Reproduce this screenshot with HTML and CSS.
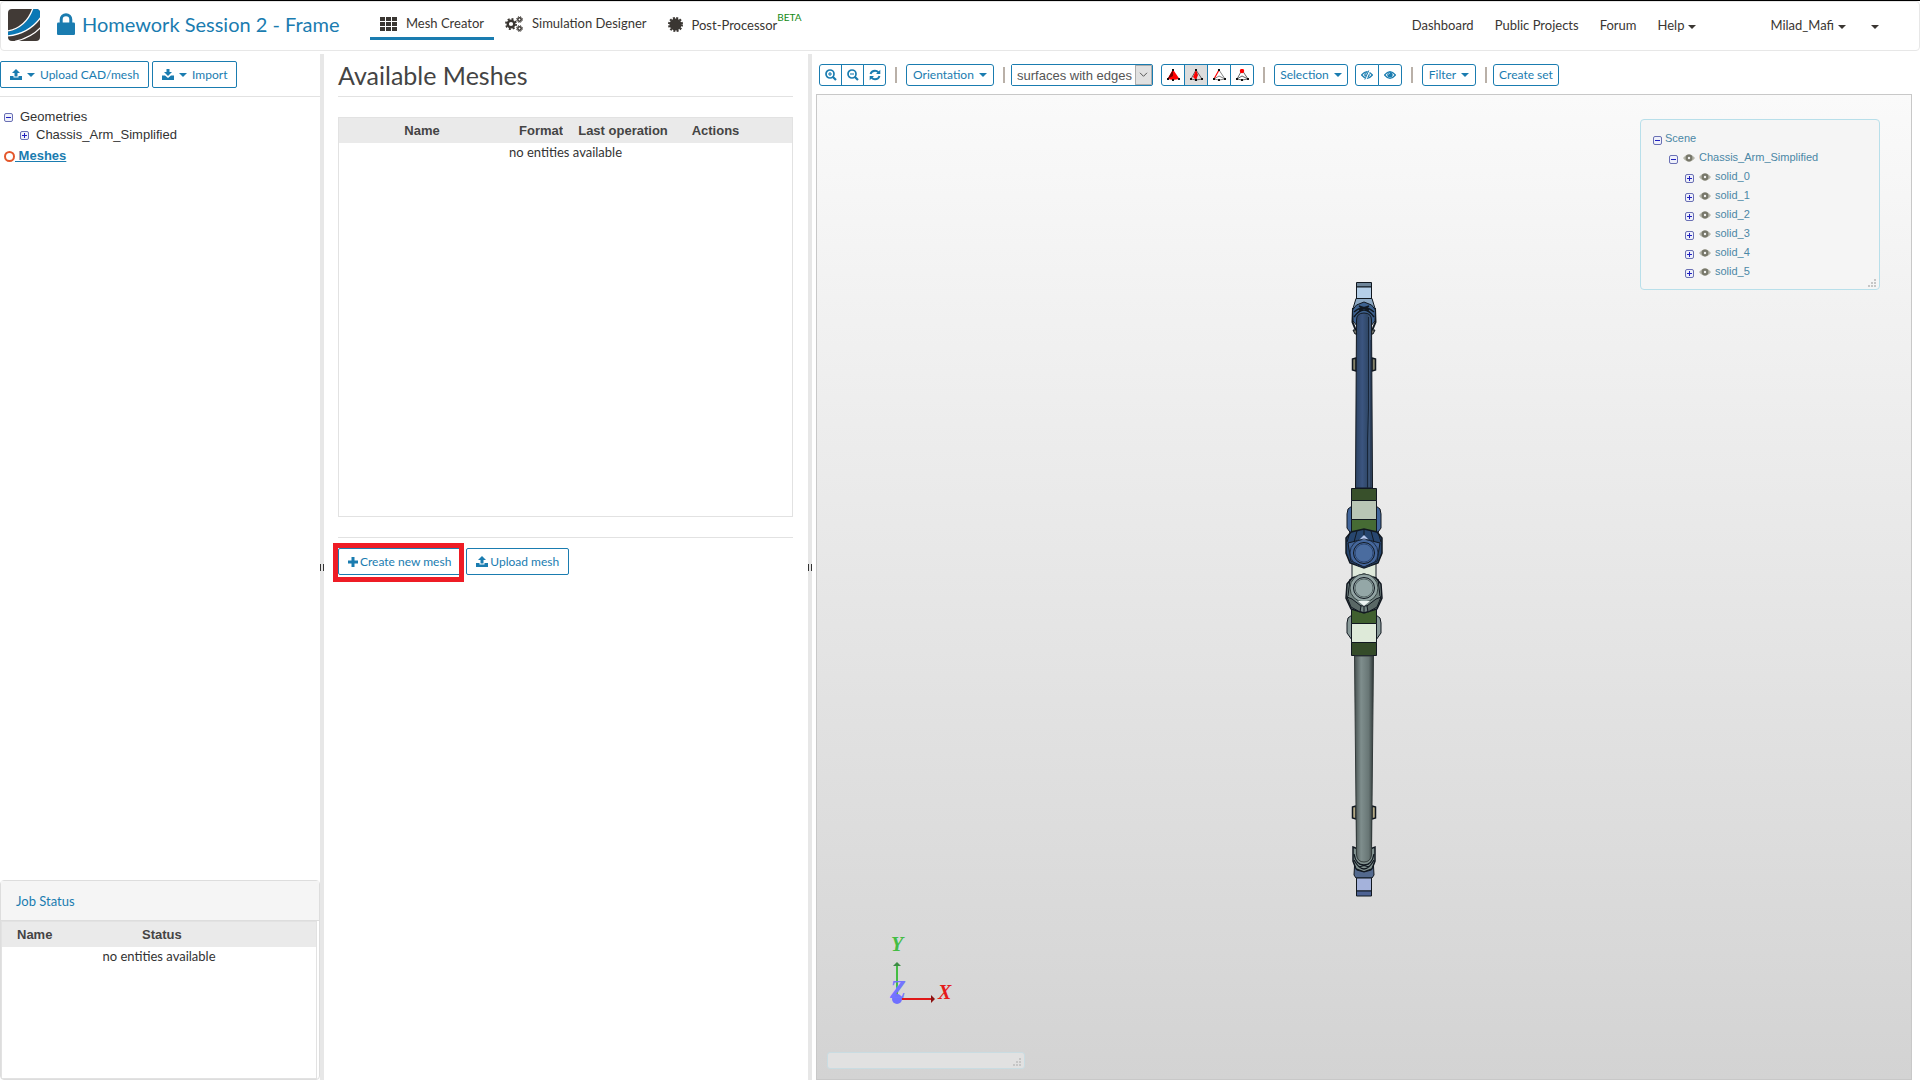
FILE: index.html
```html
<!DOCTYPE html>
<html lang="en">
<head>
<meta charset="utf-8">
<title>Homework Session 2 - Frame</title>
<meta name="viewport" content="width=device-width, initial-scale=1">
<link rel="stylesheet" href="styles.css">
</head>
<body>
<svg class="defs" width="0" height="0" aria-hidden="true">
  <symbol id="minus" viewBox="0 0 9 9"><rect x=".5" y=".5" width="8" height="8" rx="1.5" fill="#eef0fa" stroke="#6a70b4"/><path d="M2 4.5h5" stroke="#2020c0"/></symbol>
  <symbol id="plus" viewBox="0 0 9 9"><rect x=".5" y=".5" width="8" height="8" rx="1.5" fill="#eef0fa" stroke="#6a70b4"/><path d="M2 4.5h5M4.5 2v5" stroke="#2020c0"/></symbol>
  <symbol id="eye" viewBox="0 0 12 8"><path d="M0 4Q6-3.600 12 4 6 11.600 0 4z" fill="#b5b5a9"/><circle cx="6" cy="4" r="3.400" fill="#77776a"/><circle cx="6" cy="4" r="1.200" fill="#f4f4f4"/></symbol>
  <symbol id="upload" viewBox="0 0 12 11"><path d="M6 0l4 4H7.500v3.500h-3V4H2zM0 7h3.500v1.500h5V7H12v4H0z" fill="currentColor"/></symbol>
  <symbol id="download" viewBox="0 0 12 11"><path d="M4.500 0h3v3H10L6 7 2 3h2.500zM0 6.500h3L6 9l3-2.500h3V11H0z" fill="currentColor"/></symbol>
  <symbol id="view" viewBox="0 0 12 8"><path d="M.6 4Q6-2.600 11.400 4 6 10.600.6 4z" fill="none" stroke="currentColor" stroke-width="1.200"/><circle cx="6" cy="3.700" r="2.700" fill="currentColor"/><path d="M4.500 3.500Q4.600 2.300 5.800 2.200" fill="none" stroke="#fff" stroke-width=".7"/></symbol>
  <symbol id="grip" viewBox="0 0 8 8"><path d="M6 0h2v2H6zM3 3h2v2H3zM6 3h2v2H6zM0 6h2v2H0zM3 6h2v2H3zM6 6h2v2H6z" fill="#c6c6c6"/></symbol>
</svg>

<header class="topbar">
  <a class="brand" href="#" aria-label="Home"><svg width="32" height="32" viewBox="0 0 32 32"><defs><clipPath id="lg"><rect width="32" height="32" rx="4"/></clipPath></defs><g clip-path="url(#lg)"><path fill="#413a36" d="M0 0h32v32H0z"/><path d="M25-2Q19 20-2 23v4Q22 26 34 5V-2z" fill="#0a78b5"/><path d="M25-1Q18 19-1 22M33 8Q21 25-1 27M33 18Q24 28 7 32.500" fill="none" stroke="#fff" stroke-width="1.300"/></g></svg></a>
  <svg class="lock" width="18" height="22" viewBox="0 0 18 22"><path d="M4.200 11V6.500a4.800 4.800 0 0 1 9.600 0V11" fill="none" stroke="#1a7cb0" stroke-width="3"/><rect y="9.500" width="18" height="12.500" rx="1.200" fill="#1a7cb0"/></svg>
  <h1 class="title">Homework Session 2 - Frame</h1>
  <nav class="tabs">
    <a class="tab active" href="#"><svg width="17" height="14" viewBox="0 0 17 14"><path d="M0 0h5v4H0zM6 0h5v4H6zM12 0h5v4h-5zM0 5h5v4H0zM6 5h5v4H6zM12 5h5v4h-5zM0 10h5v4H0zM6 10h5v4H6zM12 10h5v4h-5z" fill="#3a3632"/></svg>Mesh Creator</a>
    <a class="tab" href="#"><svg width="18" height="16" viewBox="0 0 18 16"><g fill="none" stroke="#3a3632"><circle cx="6" cy="8" r="3.300" stroke-width="2.400"/><circle cx="6" cy="8" r="5.100" stroke-width="1.700" stroke-dasharray="2 2"/><circle cx="14.500" cy="3.500" r="1.700" stroke-width="1.500"/><circle cx="14.500" cy="3.500" r="2.900" stroke-width="1" stroke-dasharray="1.300 1"/><circle cx="14.500" cy="12.500" r="1.700" stroke-width="1.500"/><circle cx="14.500" cy="12.500" r="2.900" stroke-width="1" stroke-dasharray="1.300 1"/></g></svg>Simulation Designer</a>
    <a class="tab" href="#"><svg width="15" height="15" viewBox="0 0 15 15"><circle cx="7.500" cy="7.500" r="6" fill="#3a3632"/><circle cx="7.500" cy="7.500" r="6.500" fill="none" stroke="#3a3632" stroke-width="2" stroke-dasharray="2 1.400"/></svg><span>Post-Processor<sup class="beta">BETA</sup></span></a>
  </nav>
  <nav class="menu">
    <a href="#">Dashboard</a>
    <a href="#">Public Projects</a>
    <a href="#">Forum</a>
    <a href="#">Help<i class="caret"></i></a>
    <a class="user" href="#">Milad_Mafi<i class="caret"></i></a>
    <a class="more" href="#" aria-label="More"><i class="caret"></i></a>
  </nav>
</header>

<main class="workspace">
  <aside class="sidebar">
    <div class="side-actions">
      <button class="btn" type="button"><svg width="12" height="11"><use href="#upload"/></svg><i class="caret"></i>Upload CAD/mesh</button>
      <button class="btn" type="button"><svg width="12" height="11"><use href="#download"/></svg><i class="caret"></i>Import</button>
    </div>
    <ul class="tree">
      <li><svg width="9" height="9"><use href="#minus"/></svg>Geometries</li>
      <li class="child"><svg width="9" height="9"><use href="#plus"/></svg>Chassis_Arm_Simplified</li>
      <li class="selected"><svg width="11" height="11" viewBox="0 0 11 11"><circle cx="5.500" cy="5.500" r="4.500" fill="none" stroke="#e4572b" stroke-width="2"/></svg><a href="#">&nbsp;Meshes</a></li>
    </ul>
    <section class="jobs">
      <h2>Job Status</h2>
      <div class="job-list">
        <table class="grid">
          <colgroup><col class="j-name"><col></colgroup>
          <thead><tr><th>Name</th><th>Status</th></tr></thead>
          <tbody><tr><td colspan="2">no entities available</td></tr></tbody>
        </table>
      </div>
    </section>
  </aside>
  <div class="splitter"></div>
  <section class="meshes">
    <h2>Available Meshes</h2>
    <div class="mesh-list">
      <table class="grid">
        <colgroup><col class="m-name"><col class="m-format"><col class="m-last"><col></colgroup>
        <thead><tr><th>Name</th><th class="format">Format</th><th>Last operation</th><th class="actions">Actions</th></tr></thead>
        <tbody><tr><td colspan="4">no entities available</td></tr></tbody>
      </table>
    </div>
    <div class="mesh-actions">
      <button class="btn create" type="button"><svg width="10" height="10" viewBox="0 0 10 10"><path d="M3.500 0h3v3.500H10v3H6.500V10h-3V6.500H0v-3h3.500z" fill="currentColor"/></svg>Create new mesh</button>
      <button class="btn upload" type="button"><svg width="12" height="11"><use href="#upload"/></svg>Upload mesh</button>
    </div>
  </section>
  <div class="splitter"></div>
  <section class="viewer">
    <div class="toolbar">
      <div class="group">
        <button type="button" aria-label="Zoom in"><svg width="12" height="12" viewBox="0 0 12 12"><g fill="none" stroke="currentColor"><circle cx="5" cy="5" r="4" stroke-width="1.700"/><path d="M8 8l3 3" stroke-width="2.200"/><path d="M3 5h4M5 3v4" stroke-width="1.100"/></g></svg></button>
        <button type="button" aria-label="Zoom out"><svg width="12" height="12" viewBox="0 0 12 12"><g fill="none" stroke="currentColor"><circle cx="5" cy="5" r="4" stroke-width="1.700"/><path d="M8 8l3 3" stroke-width="2.200"/><path d="M3 5h4" stroke-width="1.100"/></g></svg></button>
        <button type="button" aria-label="Reset view"><svg width="12" height="12" viewBox="0 0 12 12"><g fill="none" stroke="currentColor" stroke-width="1.900"><path d="M1.500 5Q2.500 1.700 6 1.700q2 0 3.500 1.700M10.500 7Q9.500 10.300 6 10.300q-2 0-3.500-1.700"/></g><path d="M11.300.7v4.300H7zM.7 11.300V7H5z" fill="currentColor"/></svg></button>
      </div>
      <span class="sep"></span>
      <button class="tool orientation" type="button">Orientation<i class="caret"></i></button>
      <span class="sep tight"></span>
      <span class="picker"><select aria-label="Render mode"><option>surfaces with edges</option></select><svg width="17" height="20" viewBox="0 0 17 20"><path d="M4.500 7.500l4 4 4-4" fill="none" stroke="#444"/></svg></span>
      <div class="group pick">
        <button type="button" aria-label="Pick volumes"><svg width="13" height="12" viewBox="0 0 13 12"><path d="M6 .5l6.500 9.500L6 11 .5 10z" fill="#f00"/><path d="M6 .5L.5 10 6 7z" fill="#700"/><path d="M5 0h2v2H5zM0 9h2v2H0zM11 9h2v2h-2zM5 10h2v2H5z" fill="#111"/></svg></button>
        <button class="on" type="button" aria-label="Pick faces"><svg width="13" height="12" viewBox="0 0 13 12"><path d="M6 1L1 10l5 1zl6 9-6 1" fill="#ddd" stroke="#444" stroke-width=".8"/><path d="M6 1L3 8l3 3z" fill="#f00"/><path d="M6 1l2 5-2 5z" fill="#e00"/><path d="M5 0h2v2H5zM0 9h2v2H0zM11 9h2v2h-2zM5 10h2v2H5z" fill="#111"/></svg></button>
        <button type="button" aria-label="Pick edges"><svg width="13" height="12" viewBox="0 0 13 12"><path d="M6 1l6 9-6 1-5-1 5-3 6 3" fill="#fff" stroke="#777" stroke-width=".9"/><path d="M6 1L1 10" stroke="#f00" stroke-width="1.200"/><path d="M5 0h2v2H5zM0 9h2v2H0zM11 9h2v2h-2zM5 10h2v2H5z" fill="#111"/></svg></button>
        <button type="button" aria-label="Pick vertices"><svg width="13" height="12" viewBox="0 0 13 12"><path d="M6 1l6 9-6 1-5-1 5-3 6 3M6 1L1 10" fill="none" stroke="#555" stroke-width=".9"/><circle cx="6" cy="2" r="2.200" fill="#f00"/><path d="M0 9h2v2H0zM11 9h2v2h-2zM5 10h2v2H5z" fill="#111"/></svg></button>
      </div>
      <span class="sep"></span>
      <button class="tool selection" type="button">Selection<i class="caret"></i></button>
      <div class="group eyes">
        <button type="button" aria-label="Hide selection"><svg width="12" height="10" viewBox="0 -1 12 10"><use href="#view" width="12" height="8"/><path d="M4.300 8.500L8.300-.5" stroke="#fff" stroke-width="2"/><path d="M3.800 8.500L7.800-.5" stroke="currentColor"/></svg></button>
        <button type="button" aria-label="Show all"><svg width="12" height="8"><use href="#view"/></svg></button>
      </div>
      <span class="sep"></span>
      <button class="tool filter" type="button">Filter<i class="caret"></i></button>
      <span class="sep tight"></span>
      <button class="tool set" type="button">Create set</button>
    </div>
    <div class="canvas">
      <svg class="model" width="48" height="620" viewBox="0 0 48 620" role="img" aria-label="Chassis arm">
        <defs>
          <linearGradient id="blueRod"><stop offset="0" stop-color="#2c4363"/><stop offset=".4" stop-color="#3b5580"/><stop offset=".7" stop-color="#304868"/><stop offset="1" stop-color="#4d6485"/></linearGradient>
          <linearGradient id="greyRod"><stop offset="0" stop-color="#46504f"/><stop offset=".35" stop-color="#7f8e8d"/><stop offset=".75" stop-color="#687675"/><stop offset="1" stop-color="#303838"/></linearGradient>
        </defs>
        <g stroke="#111820" stroke-width="1">
          <path d="M16.500 2.500h15V7h-15z" fill="#6f8599"/><path d="M16.500 7h15v12h-15z" fill="#b5cfe8"/>
          <path d="M16 18.500h16l3 10H13z" fill="#8da9c4"/>
          <path d="M13 28l-.5 14 4 10M35 28l.5 14-4 10" fill="none" stroke-width="2"/>
          <path d="M12.500 30l4-5 7.500-3 7.500 3 4 5-.5 11-5 6H18l-5-6z" fill="#3e628f"/>
          <path d="M14 32q10-9 20 0M14 37q10-14 20 0M19 26l10 4M29 26l-10 4" fill="none" stroke-width="1.500"/>
          <path d="M13 50h4v4h-2zM31 50h4l-2 4h-2z" fill="#77776a"/>
          <path d="M12.500 79l3.500-1v13l-3.500-1zM35.500 79l-3.500-1v13l3.500-1z" fill="#85836b" stroke-width="1.500"/>
          <path d="M16.500 40q0-7 7.500-7t7.500 7l1 168H15.500z" fill="url(#blueRod)"/>
          <path d="M28.500 37v92l-1 30v49M31 60v148" fill="none" stroke="#172538"/>
          <path d="M8 229l4-3v29l-5-7v-14zM40 229l-4-3v29l5-7v-14z" fill="#42669b"/>
          <path d="M11.500 208.500h25v12h-25z" fill="#38502b"/><path d="M11.500 220.500h25v19h-25z" fill="#b9c6b5"/><path d="M11.500 239.500h25v15h-25z" fill="#466b34"/>
          <path d="M12 280h24v20H12z" fill="#dfeadb"/>
          <path d="M6 258l5-6 13-3 13 3 5 6v15l-4 10-14 5-14-5-4-10z" fill="#27466f" stroke-width="1.500"/>
          <path d="M24 250v11M10 252l-3 10M38 252l3 10M17 251l-3 11M31 251l3 11" fill="none"/>
          <path d="M8 263l16-4 16 4-3 18-13 6-13-6z" fill="#44669b"/><path d="M24 255l5 5H19z" fill="#b6c7ed" stroke="none"/>
          <circle cx="24" cy="273" r="14" fill="none" stroke="#1e304b"/><circle cx="24" cy="273" r="10.500" fill="#4a6c9f"/><circle cx="24" cy="273" r="9" fill="none" stroke="#2c4774"/>
          <path d="M8 338l4-3v25l-5-7v-10zM40 338l-4-3v25l5-7v-10z" fill="#899a99"/>
          <path d="M11.500 328h25v16h-25z" fill="#40602f"/><path d="M11.500 343.500h25v19h-25z" fill="#deead9"/><path d="M11.500 362.500h25v13h-25z" fill="#344b29"/>
          <path d="M7 304l5-6 12-4 12 4 5 6 1 14-5 11-13 4-13-4-5-11z" fill="#728381" stroke-width="1.500"/>
          <path d="M7 316l4 9 13 1 13-1 4-9M24 326v7M10 299l-2 17M38 299l2 17" fill="none"/>
          <path d="M7 317l5 2 9 7-1 6-9-5zM41 317l-5 2-9 7 1 6 9-5z" fill="#5a6866"/>
          <circle cx="24" cy="308" r="14" fill="#93a5a4" stroke="#364342"/><circle cx="24" cy="308" r="10.500" fill="#94a7a7"/><circle cx="24" cy="308" r="9" fill="none" stroke="#586867"/>
          <path d="M18 321h12l-6 5z" fill="#edf4f3" stroke="none"/>
          <path d="M12.500 527l3.500-1v13l-3.500-1zM35.500 527l-3.500-1v13l3.500-1z" fill="#b5aa86" stroke-width="1.500"/>
          <path d="M17 526v50M31 526v50" stroke-width="2"/>
          <path d="M13 567l5 2h12l5-2v14l-3 8-8 3-8-3-3-8z" fill="#81918f" stroke-width="1.500"/>
          <path d="M14.500 586l2 4 7.500 2 7.500-2 2-4 .5 9-2 3h-16l-2-3z" fill="#53698e"/>
          <path d="M14.500 376h19L31.500 575q-1 7-7.500 7t-7.500-7z" fill="url(#greyRod)" stroke="#333b3b"/>
          <path d="M14 574q2 11 10 11t10-11M14 580q5 9 10 9t10-9M19 587l10-3M29 587l-10-3" fill="none" stroke-width="1.300"/>
          <path d="M16.500 598h15v13h-15z" fill="#a4b2db"/><path d="M16.500 611h15v5h-15z" fill="#4d6293"/>
        </g>
      </svg>
      <div class="scene">
        <ul>
          <li><svg width="9" height="9"><use href="#minus"/></svg>Scene</li>
          <li class="l2"><svg width="9" height="9"><use href="#minus"/></svg><svg class="eye" width="12" height="8"><use href="#eye"/></svg>Chassis_Arm_Simplified</li>
          <li class="l3"><svg width="9" height="9"><use href="#plus"/></svg><svg class="eye" width="12" height="8"><use href="#eye"/></svg>solid_0</li>
          <li class="l3"><svg width="9" height="9"><use href="#plus"/></svg><svg class="eye" width="12" height="8"><use href="#eye"/></svg>solid_1</li>
          <li class="l3"><svg width="9" height="9"><use href="#plus"/></svg><svg class="eye" width="12" height="8"><use href="#eye"/></svg>solid_2</li>
          <li class="l3"><svg width="9" height="9"><use href="#plus"/></svg><svg class="eye" width="12" height="8"><use href="#eye"/></svg>solid_3</li>
          <li class="l3"><svg width="9" height="9"><use href="#plus"/></svg><svg class="eye" width="12" height="8"><use href="#eye"/></svg>solid_4</li>
          <li class="l3"><svg width="9" height="9"><use href="#plus"/></svg><svg class="eye" width="12" height="8"><use href="#eye"/></svg>solid_5</li>
        </ul>
        <svg class="grip" width="8" height="8"><use href="#grip"/></svg>
      </div>
      <svg class="axes" width="80" height="82" viewBox="0 -10 80 82">
        <path d="M12 60V28" stroke="#43bd43" stroke-width="2"/><path d="M8 29l4-4 4 4z" fill="#3d8b45"/>
        <path d="M12 62h36" stroke="#e01818" stroke-width="2"/><path d="M46 58l4 4-4 4z" fill="#8c1212"/>
        <circle cx="12" cy="62" r="5" fill="#7070ff"/>
        <text x="6" y="14" fill="#43bd43">Y</text><text class="near" x="5" y="61" fill="#7474ff">Z</text><text x="53" y="62" fill="#e51a1a">X</text>
      </svg>
      <div class="console"><svg class="grip" width="8" height="8"><use href="#grip"/></svg></div>
    </div>
  </section>
</main>
</body>
</html>
```

FILE: styles.css
```css
:root {
  --blue: #1a7cb0;
  --line: #e2e2e2;
  --ink: #3a3632;
}

* { box-sizing: border-box; }

body {
  margin: 0;
  height: 100vh;
  display: flex;
  flex-direction: column;
  overflow: hidden;
  border-top: 1px solid #000;
  background: #fff;
  color: #333;
  font: 13px/18px Lato, "Liberation Sans", sans-serif;
}

a { color: inherit; text-decoration: none; }
ul { list-style: none; margin: 0; padding: 0; }
h1, h2 { margin: 0; font-weight: 400; }
svg { display: block; flex: none; }
.defs { position: absolute; }

button {
  font: inherit;
  font-size: 12px;
  color: var(--blue);
  background: #fff;
  border: 1px solid var(--blue);
  display: flex;
  align-items: center;
  justify-content: center;
  white-space: nowrap;
  padding: 0;
}

.caret {
  display: inline-block;
  border: 4px solid transparent;
  border-top-color: currentColor;
  border-bottom: 0;
  vertical-align: middle;
}

/* Top bar */
.topbar {
  flex: none;
  display: flex;
  height: 50px;
  padding: 0 40px 0 7px;
  border: 1px solid #e7e7e7;
  border-radius: 4px;
  color: var(--ink);
  white-space: nowrap;
}
.brand { margin-top: 7px; }
.lock { margin: 11px 7px 0 17px; }
.title { width: 253px; font-size: 20px; line-height: 44px; color: var(--blue); }
.tabs { display: flex; margin-left: 35px; gap: 1px; }
.tab { display: flex; align-items: center; gap: 9px; height: 38px; padding: 7px 10px 0; border-bottom: 3px solid transparent; }
.tab.active { border-color: var(--blue); }
.tab > svg { margin-top: 2px; }
.beta { font-size: 10px; line-height: 10px; color: #138a13; vertical-align: 9px; }
.menu { display: flex; margin-left: auto; gap: 21px; line-height: 46px; }
.menu .caret { margin-left: 4px; }
.user { margin-left: 53px; }

/* Columns */
.workspace { flex: 1; display: flex; min-height: 0; padding-top: 3px; }
.splitter { flex: none; display: flex; align-items: center; justify-content: center; width: 4px; background: #e7e7e7; }
.splitter::before { content: ""; width: 3px; height: 7px; border: 1px solid #333; border-width: 0 1px; }

.sidebar { flex: none; width: 320px; display: flex; flex-direction: column; }
.side-actions { display: flex; gap: 3px; padding: 7px 0 8px; border-bottom: 1px solid var(--line); }
.btn { height: 27px; border-radius: 2px; padding: 0 9px; gap: 5px; }
.tree { padding: 11px 4px; font: 13px/18px "Liberation Sans", Arial, sans-serif; }
.tree li { display: flex; align-items: center; gap: 7px; }
.tree .child { padding-left: 16px; }
.tree .selected { gap: 0; margin-top: 3px; color: var(--blue); font-weight: 700; }
.selected a { text-decoration: underline; }

.jobs { margin-top: auto; height: 200px; display: flex; flex-direction: column; border: 1px solid #ddd; border-radius: 4px; }
.jobs h2 { height: 40px; padding-left: 15px; background: #f5f5f5; border-bottom: 1px solid #ddd; font-size: 13px; line-height: 40px; color: var(--blue); }
.job-list { flex: 1; margin-right: 2px; border: 1px solid var(--line); }

.grid { width: 100%; table-layout: fixed; border-collapse: collapse; }
.grid th { height: 25px; padding: 0; overflow: hidden; background: #eaeaea; color: #444; font: 700 13px/24px "Liberation Sans", Arial, sans-serif; white-space: nowrap; }
.grid td { padding: 0; line-height: 19px; text-align: center; }
.jobs th { padding-left: 15px; text-align: left; }
.j-name { width: 125px; }

.meshes { flex: none; width: 484px; padding: 0 15px 0 14px; }
.meshes h2 { height: 43px; margin-bottom: 20px; border-bottom: 1px solid var(--line); font-size: 25px; line-height: 43px; color: #444; }
.mesh-list { height: 400px; border: 1px solid var(--line); }
.m-name { width: 166px; }
.m-format { width: 58px; }
.m-last { width: 120px; }
.grid .format { padding-left: 14px; text-align: left; }
.grid .actions { padding-right: 44px; }
.mesh-actions { display: flex; gap: 5px; margin-top: 20px; padding-top: 10px; border-top: 1px solid var(--line); }
.mesh-actions .btn { gap: 2px; }
.create { position: relative; }
.create::after { content: ""; position: absolute; inset: -6px -4px -8px -6px; border: 5px solid #ee1c25; }

/* 3D viewer */
.viewer { flex: 1; min-width: 0; display: flex; flex-direction: column; padding: 0 8px 0 4px; }
.toolbar { flex: none; display: flex; align-items: center; height: 40px; padding: 2px 0 0 3px; }
.group { display: flex; }
.group button { width: 23px; height: 22px; margin-left: -1px; }
.group button:first-child { margin-left: 0; border-radius: 3px 0 0 3px; }
.group button:last-child { border-radius: 0 3px 3px 0; }
.pick { margin-left: 8px; }
.pick button { width: 24px; }
.pick .on { background: #ddd; }
.eyes { margin-left: 7px; }
.eyes button { width: 24px; }
.sep { width: 2px; height: 16px; margin: 0 9px; background: #b9b0a8; }
.sep.tight { margin-right: 6px; }
.tool { height: 22px; border-radius: 3px; gap: 5px; }
.orientation { width: 88px; }
.selection { width: 74px; }
.filter { width: 54px; }
.set { width: 66px; }
.picker { display: flex; width: 142px; height: 22px; border: 1px solid var(--blue); border-radius: 2px; }
.picker select { flex: 1; min-width: 0; appearance: none; border: 0; padding: 0 0 0 5px; background: #fff; color: #555; font: 13px "Liberation Sans", Arial, sans-serif; }
.picker svg { background: #e1e1e1; border: 1px solid #adadad; }

.canvas { position: relative; flex: 1; display: grid; place-items: center; padding-top: 6px; border: 1px solid #c8c8c8; background: linear-gradient(#fafafa, #d3d3d3); }
.scene { position: absolute; top: 24px; right: 31px; width: 240px; height: 171px; padding: 9px 12px; border: 1px solid #b8dfea; border-radius: 4px; background: #f5f5f5; font: 11px/19px "Liberation Sans", Arial, sans-serif; color: #4b87a5; }
.scene li { display: flex; align-items: center; gap: 3px; }
.scene li svg:first-child { margin-top: 3px; }
.scene .eye { margin: 1px 1px 0 2px; }
.scene .l2 { padding-left: 16px; }
.scene .l3 { padding-left: 32px; }
.grip { position: absolute; right: 3px; bottom: 2px; }
.axes { position: absolute; left: 68px; bottom: 70px; font: italic 700 20px "Liberation Serif", serif; }
.near { font-size: 26px; }
.console { position: absolute; left: 10px; bottom: 10px; width: 198px; height: 17px; border: 1px solid #c9dce2; border-radius: 3px; background: #e1e1e1; }
```
